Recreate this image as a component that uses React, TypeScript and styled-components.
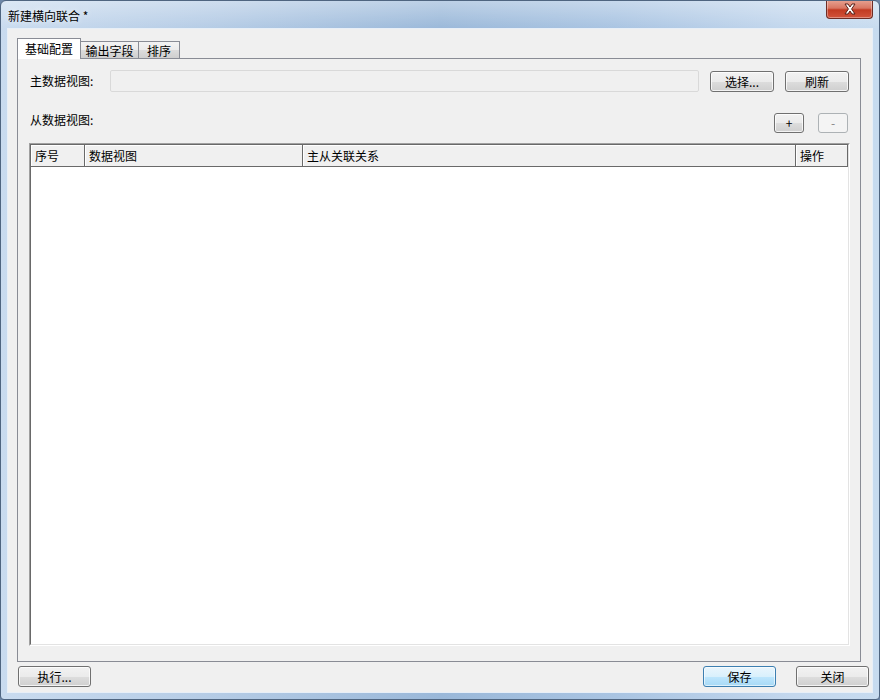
import React from "react";
import styled, { createGlobalStyle, css } from "styled-components";

const GlobalStyle = createGlobalStyle`
  html, body { margin: 0; padding: 0; background: #6d87a8; }
  body { font-family: "Noto Sans CJK SC", "Noto Sans", sans-serif; font-size: 12px; color: #000; }
  * { box-sizing: border-box; }
`;

const Frame = styled.div`
  width: 880px;
  height: 700px;
  display: flex;
  flex-direction: column;
  border: 1px solid #4f6580;
  border-radius: 6px 6px 4px 4px;
  background:
    linear-gradient(180deg, rgba(255,255,255,0.35) 0px, rgba(255,255,255,0) 28px),
    linear-gradient(90deg, #c9dbef 0%, #b4cbe5 25%, #9ab8d9 50%, #a9c4e2 70%, #c3d7ed 90%, #c7dbef 100%);
  overflow: hidden;
`;

const TitleBar = styled.div`
  height: 27px;
  flex: none;
  display: flex;
  align-items: flex-start;
  justify-content: space-between;
  padding-left: 7px;
`;

const Title = styled.div`
  font-size: 12px;
  line-height: 14px;
  margin-top: 8px;
  color: #000;
  text-shadow: 0 0 6px rgba(255,255,255,0.9);
`;

const CloseButton = styled.div`
  width: 47px;
  height: 19px;
  margin-top: -1px;
  margin-right: 6px;
  border: 1px solid #6e2c25;
  border-top: none;
  border-radius: 0 0 4px 4px;
  background: linear-gradient(180deg, #e8a493 0%, #d97662 45%, #c23a22 55%, #d2533b 100%);
  box-shadow: inset 0 0 0 1px rgba(255,255,255,0.35);
  display: flex;
  align-items: center;
  justify-content: center;
`;

const Client = styled.div`
  flex: 1;
  margin: 0 6px 6px 6px;
  border: 1px solid #e8eff7;
  background: #f0f0f0;
  display: flex;
  flex-direction: column;
  padding: 9px 11px 0 9px;
`;

const TabStrip = styled.div`
  display: flex;
  align-items: flex-end;
  height: 20px;
  position: relative;
  z-index: 1;
`;

const Tab = styled.div<{ $w: number; $active?: boolean }>`
  width: ${(p) => p.$w}px;
  display: flex;
  align-items: center;
  justify-content: center;
  border: 1px solid #898c95;
  border-bottom: none;
  font-size: 12px;
  ${(p) =>
    p.$active
      ? css`
          height: 21px;
          margin-bottom: -1px;
          background: #ffffff;
          padding-bottom: 2px;
        `
      : css`
          height: 17px;
          margin-left: -1px;
          background: linear-gradient(180deg, #f3f3f3 0%, #ebebeb 50%, #dcdcdc 51%, #cfcfcf 100%);
          padding-top: 1px;
        `}
`;

const TabPanel = styled.div`
  flex: 1;
  border: 1px solid #898c95;
  background: #f0f0f0;
  display: flex;
  flex-direction: column;
  padding: 11px 11px 15px 12px;
`;

const FormRow = styled.div`
  display: flex;
  align-items: flex-end;
  height: 22px;
`;

const Label = styled.div<{ $w?: number; $top?: boolean }>`
  width: ${(p) => (p.$w ? `${p.$w}px` : "auto")};
  flex: none;
  font-size: 12px;
  line-height: ${(p) => (p.$top ? "14px" : "16px")};
  align-self: ${(p) => (p.$top ? "flex-start" : "center")};
`;

const TextBox = styled.div`
  flex: 1;
  height: 22px;
  border: 1px solid #d9d9d9;
  border-radius: 2px;
  background: #f0f0f0;
  margin-right: 11px;
`;

const Button = styled.div<{ $w: number; $h?: number; $focused?: boolean; $disabled?: boolean }>`
  width: ${(p) => p.$w}px;
  height: ${(p) => p.$h ?? 21}px;
  flex: none;
  border: 1px solid #707070;
  border-radius: 3px;
  background: linear-gradient(180deg, #f2f2f2 0%, #ebebeb 50%, #dddddd 51%, #cfcfcf 100%);
  box-shadow: inset 0 0 0 1px rgba(255,255,255,0.75);
  display: flex;
  align-items: center;
  justify-content: center;
  font-size: 12px;
  line-height: 14px;
  color: #000;
  ${(p) =>
    p.$focused &&
    css`
      border-color: #3c7fb1;
      background: linear-gradient(180deg, #eaf6fd 0%, #d9f0fc 50%, #bee6fd 51%, #a7d9f5 100%);
      box-shadow: inset 0 0 0 1px rgba(255,255,255,0.6);
    `}
  ${(p) =>
    p.$disabled &&
    css`
      border-color: #adb2b5;
      background: #f4f4f4;
      box-shadow: none;
      color: #838383;
    `}
`;

const SubRow = styled.div`
  display: flex;
  align-items: flex-start;
  justify-content: space-between;
  margin-top: 21px;
  height: 20px;
`;

const SmallButtons = styled.div`
  display: flex;
  gap: 14px;
  padding-right: 1px;
`;

const TableOuter = styled.div`
  margin: 10px -1px 0 -1px;
  flex: 1;
  border: 1px solid;
  border-color: #a0a0a0 #ffffff #ffffff #a0a0a0;
  display: flex;
`;

const TableInner = styled.div`
  flex: 1;
  border: 1px solid;
  border-color: #696969 #e3e3e3 #e3e3e3 #696969;
  background: #ffffff;
  display: flex;
  flex-direction: column;
`;

const HeaderRow = styled.div`
  display: grid;
  grid-template-columns: 54px 218px 1fr 52px;
  height: 22px;
  background: #f0f0f0;
`;

const HeaderCell = styled.div`
  border-right: 1px solid #696969;
  border-bottom: 1px solid #696969;
  box-shadow: inset 1px 1px 0 #ffffff;
  padding-left: 4px;
  display: flex;
  align-items: center;
  font-size: 12px;
  line-height: 14px;
  white-space: nowrap;
  overflow: hidden;
`;

const Footer = styled.div`
  display: flex;
  align-items: center;
  justify-content: space-between;
  height: 30px;
  margin-right: -8px;
  padding: 0 0 1px 1px;
`;

const FooterRight = styled.div`
  display: flex;
  gap: 20px;
`;

const CloseGlyph = () => (
  <svg width="14" height="12" viewBox="0 0 14 12">
    <path
      d="M2 1 L5 1 L7 4 L9 1 L12 1 L8.6 6 L12 11 L9 11 L7 8 L5 11 L2 11 L5.4 6 Z"
      fill="#ffffff"
      stroke="#5a2018"
      strokeWidth="1"
      strokeLinejoin="round"
    />
  </svg>
);

export default function App() {
  return (
    <>
      <GlobalStyle />
      <Frame>
        <TitleBar>
          <Title>新建横向联合 *</Title>
          <CloseButton>
            <CloseGlyph />
          </CloseButton>
        </TitleBar>
        <Client>
          <TabStrip>
            <Tab $w={64} $active>基础配置</Tab>
            <Tab $w={59}>输出字段</Tab>
            <Tab $w={42}>排序</Tab>
          </TabStrip>
          <TabPanel>
            <FormRow>
              <Label $w={80}>主数据视图:</Label>
              <TextBox />
              <Button $w={64}>选择...</Button>
              <Button $w={64} style={{ marginLeft: 11 }}>刷新</Button>
            </FormRow>
            <SubRow>
              <Label $top>从数据视图:</Label>
              <SmallButtons>
                <Button $w={30} $h={20}>+</Button>
                <Button $w={30} $h={20} $disabled>-</Button>
              </SmallButtons>
            </SubRow>
            <TableOuter>
              <TableInner>
                <HeaderRow>
                  <HeaderCell>序号</HeaderCell>
                  <HeaderCell>数据视图</HeaderCell>
                  <HeaderCell>主从关联关系</HeaderCell>
                  <HeaderCell>操作</HeaderCell>
                </HeaderRow>
              </TableInner>
            </TableOuter>
          </TabPanel>
          <Footer>
            <Button $w={73} $h={21}>执行...</Button>
            <FooterRight>
              <Button $w={73} $h={21} $focused>保存</Button>
              <Button $w={73} $h={21}>关闭</Button>
            </FooterRight>
          </Footer>
        </Client>
      </Frame>
    </>
  );
}
